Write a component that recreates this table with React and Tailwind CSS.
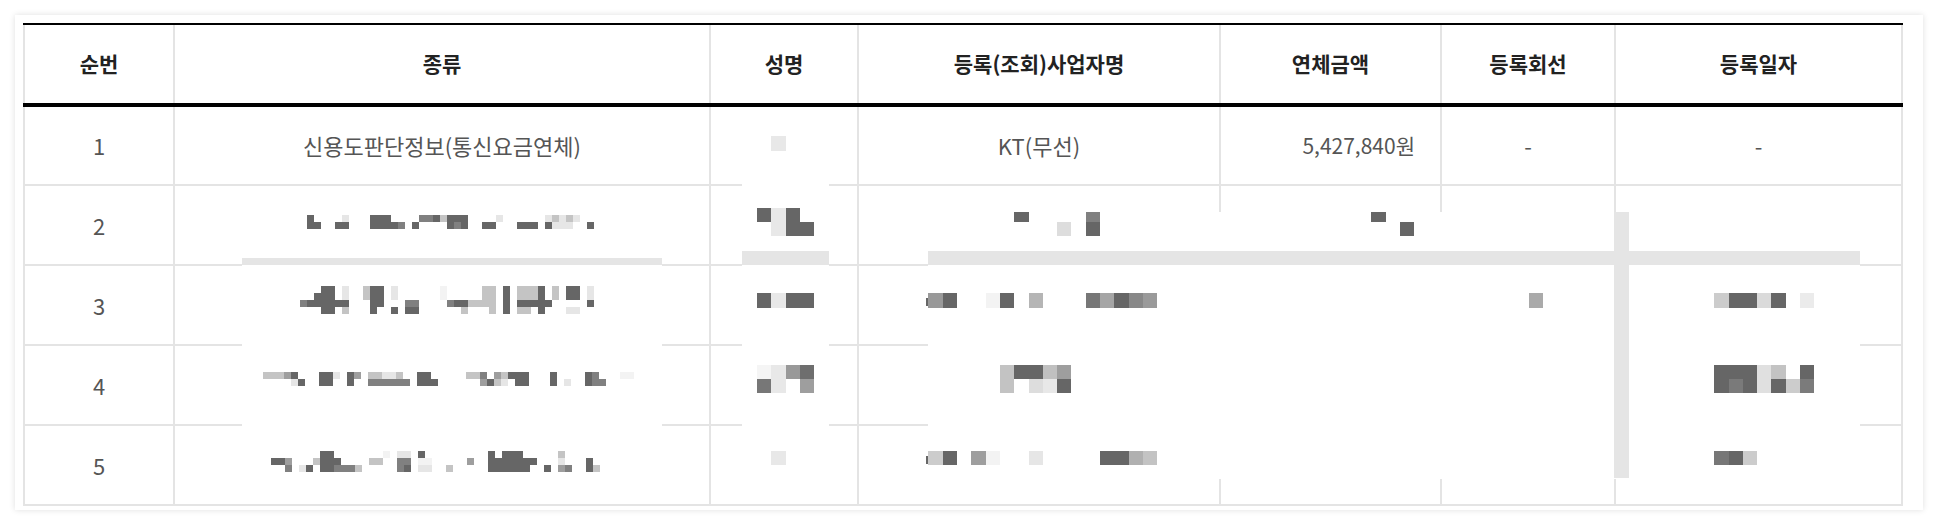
import React from 'react';

const SHADE = {
    d: '#666666',
    m: '#808080',
    g: '#9e9e9e',
    l: '#c4c4c4',
    w: '#e6e6e6',
    f: '#f3f3f3',
};

const HEADERS = ['순번', '종류', '성명', '등록(조회)사업자명', '연체금액', '등록회선', '등록일자'];

// table origin on the page; overlay rects below are in page coordinates
const OX = 23;
const OY = 23;

const fromRows = (x0, y0, size, rows) => {
    const out = [];
    rows.forEach((row, r) => {
        row.split('').forEach((c, i) => {
            if (c !== ' ') out.push([x0 + i * size, y0 + r * size, size, size, SHADE[c]]);
        });
    });
    return out;
};

const fromRuns = (x0, y0, size, runs) =>
    runs.map(([r, a, b, c]) => [x0 + a * size, y0 + r * size, (b - a + 1) * size, size, SHADE[c]]);

// mosaic of the 종류 column (7px cells)
const kindMosaic = [
    ...fromRows(307, 215, 7, [
        'd    w   ddd    mmdlddd    w      wlwlw  ',
        'dd  dd   ddddm d    dmd  dd   ddd dwww  d',
    ]),
    ...fromRuns(300, 286, 7, [
        [0, 3, 4, 'd'], [0, 6, 6, 'w'], [0, 9, 9, 'l'], [0, 10, 11, 'd'], [0, 13, 13, 'w'], [0, 20, 20, 'f'],
        [0, 26, 27, 'l'], [0, 29, 29, 'd'], [0, 31, 33, 'l'], [0, 34, 34, 'd'], [0, 36, 36, 'l'], [0, 38, 39, 'd'], [0, 41, 41, 'w'],
        [1, 2, 4, 'd'], [1, 6, 6, 'w'], [1, 9, 9, 'l'], [1, 10, 11, 'd'], [1, 13, 13, 'w'], [1, 20, 20, 'f'],
        [1, 26, 27, 'l'], [1, 29, 29, 'd'], [1, 31, 33, 'l'], [1, 34, 34, 'd'], [1, 36, 36, 'l'], [1, 38, 39, 'd'], [1, 41, 41, 'w'],
        [2, 0, 0, 'm'], [2, 1, 6, 'd'], [2, 10, 11, 'd'], [2, 15, 16, 'm'], [2, 21, 21, 'm'], [2, 22, 23, 'd'],
        [2, 24, 27, 'l'], [2, 29, 29, 'd'], [2, 31, 35, 'd'], [2, 41, 41, 'd'],
        [3, 3, 4, 'd'], [3, 6, 6, 'l'], [3, 10, 10, 'd'], [3, 13, 13, 'd'], [3, 15, 16, 'd'], [3, 23, 23, 'l'],
        [3, 27, 27, 'l'], [3, 29, 29, 'd'], [3, 31, 32, 'l'], [3, 34, 34, 'd'], [3, 38, 39, 'w'],
    ]),
    ...fromRuns(263, 372, 7, [
        [0, 0, 2, 'l'], [0, 3, 3, 'g'], [0, 4, 4, 'd'], [1, 4, 4, 'w'], [1, 5, 5, 'd'],
        [0, 8, 9, 'd'], [1, 8, 9, 'd'], [0, 10, 10, 'w'],
        [0, 12, 12, 'd'], [1, 12, 12, 'd'], [0, 13, 13, 'g'],
        [0, 15, 16, 'l'], [1, 15, 20, 'm'], [0, 17, 18, 'w'], [0, 19, 19, 'l'],
        [0, 22, 23, 'd'], [1, 22, 24, 'd'],
        [0, 29, 30, 'l'], [0, 31, 31, 'm'], [1, 31, 31, 'g'], [1, 32, 32, 'd'], [0, 33, 33, 'g'], [1, 33, 33, 'l'],
        [0, 34, 34, 'l'], [1, 34, 34, 'w'], [0, 35, 35, 'd'], [0, 36, 37, 'd'], [1, 36, 37, 'd'],
        [0, 41, 41, 'd'], [1, 41, 41, 'd'], [1, 43, 43, 'w'], [0, 46, 46, 'd'], [1, 46, 46, 'd'],
        [0, 47, 47, 'm'], [1, 47, 48, 'm'], [0, 51, 52, 'f'],
    ]),
    ...fromRuns(271, 451, 7, [
        [1, 0, 1, 'd'], [1, 2, 2, 'g'], [2, 2, 2, 'm'], [2, 4, 4, 'w'], [2, 5, 5, 'd'], [1, 6, 6, 'l'],
        [0, 7, 8, 'd'], [1, 7, 8, 'd'], [2, 7, 8, 'd'], [1, 9, 9, 'd'], [2, 9, 11, 'm'], [2, 12, 12, 'l'],
        [1, 14, 15, 'l'], [0, 16, 16, 'f'], [0, 18, 19, 'w'], [1, 18, 19, 'm'], [2, 18, 18, 'm'], [2, 19, 19, 'd'],
        [0, 21, 21, 'd'], [1, 21, 22, 'f'], [2, 21, 22, 'w'], [2, 25, 25, 'l'], [1, 28, 28, 'g'],
        [0, 31, 31, 'd'], [1, 31, 32, 'd'], [2, 31, 32, 'd'], [0, 33, 35, 'd'], [1, 33, 35, 'd'], [2, 33, 35, 'd'],
        [1, 36, 37, 'd'], [2, 36, 36, 'd'], [2, 39, 39, 'd'], [0, 41, 41, 'l'], [1, 41, 41, 'w'], [2, 41, 41, 'g'],
        [2, 42, 42, 'm'], [1, 45, 45, 'd'], [2, 45, 45, 'd'], [2, 46, 46, 'l'],
    ]),
];

// coarse mosaic (14px cells) of the other columns
const coarseMosaic = [
    // 성명
    [771, 136, 15, 15, '#e8e8e8'],
    [757, 208, 14, 14, SHADE.d], [771, 208, 15, 28, '#e8e8e8'], [786, 208, 14, 28, SHADE.d], [800, 222, 14, 14, SHADE.d],
    [757, 293, 14, 15, SHADE.d], [771, 293, 15, 15, '#e8e8e8'], [786, 293, 28, 15, SHADE.d],
    [757, 365, 14, 14, '#f5f5f5'], [771, 365, 15, 28, '#e8e8e8'], [786, 365, 14, 14, '#999999'], [800, 365, 14, 14, '#6e6e6e'],
    [757, 379, 14, 14, '#777777'], [800, 379, 14, 14, '#9e9e9e'],
    [771, 451, 15, 14, '#e8e8e8'],
    // 등록(조회)사업자명
    [1014, 212, 15, 10, SHADE.d], [1057, 222, 14, 14, '#dddddd'], [1086, 212, 14, 10, SHADE.m], [1086, 222, 14, 14, SHADE.d],
    [926, 298, 2, 8, SHADE.d],
    [928, 293, 15, 15, '#999999'], [943, 293, 14, 15, SHADE.d], [986, 293, 14, 15, '#f3f3f3'], [1000, 293, 14, 15, SHADE.d],
    [1029, 293, 14, 15, '#b5b5b5'], [1086, 293, 14, 15, '#777777'], [1100, 293, 14, 15, '#a5a5a5'], [1114, 293, 15, 15, SHADE.d],
    [1129, 293, 14, 15, '#888888'], [1143, 293, 14, 15, '#9a9a9a'],
    [1000, 365, 14, 28, '#c3c3c3'], [1014, 365, 29, 14, SHADE.d], [1043, 365, 14, 14, '#c0c0c0'], [1057, 365, 14, 14, '#9e9e9e'],
    [1029, 379, 14, 14, '#dddddd'], [1043, 379, 14, 14, '#e8e8e8'], [1057, 379, 14, 14, SHADE.d],
    [926, 456, 2, 8, SHADE.d],
    [928, 451, 15, 14, '#cccccc'], [943, 451, 14, 14, SHADE.d], [971, 451, 15, 14, '#9e9e9e'], [986, 451, 14, 14, '#f3f3f3'],
    [1029, 451, 14, 14, '#e6e6e6'], [1100, 451, 29, 14, SHADE.d], [1129, 451, 14, 14, '#b0b0b0'], [1143, 451, 14, 14, '#c3c3c3'],
    // 연체금액
    [1371, 212, 15, 10, SHADE.d], [1400, 222, 14, 14, SHADE.d],
    // 등록회선
    [1529, 293, 14, 15, '#aaaaaa'],
    // 등록일자
    [1714, 293, 15, 15, '#cccccc'], [1729, 293, 28, 15, SHADE.d], [1757, 293, 14, 15, '#dadada'], [1771, 293, 15, 15, SHADE.d],
    [1800, 293, 14, 15, '#ebebeb'],
    [1714, 365, 43, 14, SHADE.d], [1757, 365, 14, 14, '#e0e0e0'], [1771, 365, 15, 14, '#c3c3c3'], [1800, 365, 14, 14, SHADE.d],
    [1714, 379, 15, 14, SHADE.d], [1729, 379, 14, 14, '#7a7a7a'], [1743, 379, 14, 14, SHADE.d], [1757, 379, 14, 14, '#e0e0e0'],
    [1771, 379, 15, 14, SHADE.d], [1786, 379, 14, 14, '#cccccc'], [1800, 379, 14, 14, '#7b7b7b'],
    [1714, 451, 15, 14, '#777777'], [1729, 451, 14, 14, SHADE.d], [1743, 451, 14, 14, '#cccccc'],
];

// white patches and grey strokes of the redaction
const patches = [
    [242, 265, 420, 235, '#ffffff'],
    [742, 180, 87, 318, '#ffffff'],
    [928, 212, 932, 267, '#ffffff'],
    [242, 258, 420, 7, '#e5e5e5'],
    [742, 251, 87, 14, '#e5e5e5'],
    [928, 251, 932, 14, '#e5e5e5'],
    [1614, 212, 15, 266, '#e5e5e5'],
];

const Rect = ({ r }) => (
    <div
        className="absolute"
        style={{ left: r[0] - OX, top: r[1] - OY, width: r[2], height: r[3], background: r[4] }}
    />
);

const Cell = ({ first, h, className = '', children }) => (
    <div
        className={`flex items-center border-r-2 border-b-2 border-[#e4e4e4] ${first ? 'border-l-2' : ''} ${h} ${className}`}
    >
        {children}
    </div>
);

const App = () => {
    const rows = [1, 2, 3, 4, 5];

    return (
        <div className="min-h-[522px] bg-white pt-[15px] pl-[15px] font-['Noto_Sans_CJK_KR','Noto_Sans',sans-serif]">
            <div className="w-[1908px] bg-white pl-2 pr-5 pt-2 pb-1 shadow-[0_0_6px_rgba(0,0,0,0.13)]">
                <div className="relative w-[1880px]">
                    <div className="grid grid-cols-[152px_536px_148px_362px_221px_174px_287px] border-t-2 border-b-4 border-black">
                        {HEADERS.map((t, i) => (
                            <div
                                key={t}
                                className={`flex h-[78px] items-center justify-center border-r-2 border-[#e4e4e4] text-[21px] font-bold text-[#222] ${i === 0 ? 'border-l-2' : ''}`}
                            >
                                {t}
                            </div>
                        ))}
                    </div>

                    {rows.map((n) => {
                        const h = n === 1 ? 'h-[79px]' : 'h-[80px]';
                        return (
                            <div
                                key={n}
                                className="grid grid-cols-[152px_536px_148px_362px_221px_174px_287px] text-[22px] text-[#555]"
                            >
                                <Cell first h={h} className="justify-center">{n}</Cell>
                                <Cell h={h} className="justify-center">{n === 1 ? '신용도판단정보(통신요금연체)' : ''}</Cell>
                                <Cell h={h} className="justify-center" />
                                <Cell h={h} className="justify-center">{n === 1 ? 'KT(무선)' : ''}</Cell>
                                <Cell h={h} className="justify-end pr-[25px] text-[21px]">{n === 1 ? '5,427,840원' : ''}</Cell>
                                <Cell h={h} className="justify-center">{n === 1 ? '-' : ''}</Cell>
                                <Cell h={h} className="justify-center">{n === 1 ? '-' : ''}</Cell>
                            </div>
                        );
                    })}

                    {/* redaction layer */}
                    <div className="pointer-events-none absolute inset-0">
                        {patches.map((r, i) => <Rect key={`p${i}`} r={r} />)}
                        {kindMosaic.map((r, i) => <Rect key={`k${i}`} r={r} />)}
                        {coarseMosaic.map((r, i) => <Rect key={`c${i}`} r={r} />)}
                    </div>
                </div>
            </div>
        </div>
    );
};

export default App;
